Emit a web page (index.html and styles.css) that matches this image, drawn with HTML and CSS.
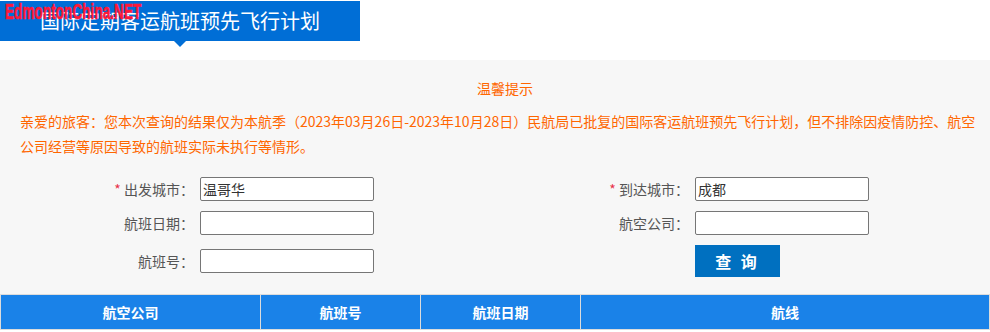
FILE: index.html
```
<!DOCTYPE html>
<html lang="zh-CN">
<head>
    <meta charset="UTF-8">
    <title>国际定期客运航班预先飞行计划</title>
    <link rel="stylesheet" href="styles.css">
</head>
<body>
    <div class="watermark">EdmontonChina.NET</div>
    <div class="tab">国际定期客运航班预先飞行计划</div>

    <div class="panel">
        <div class="tips-title">温馨提示</div>
        <p class="tips">亲爱的旅客：您本次查询的结果仅为本航季（2023年03月26日-2023年10月28日）民航局已批复的国际客运航班预先飞行计划，但不排除因疫情防控、航空公司经营等原因导致的航班实际未执行等情形。</p>

        <div class="form">
            <div class="field">
                <label><span class="req">*</span> 出发城市：</label>
                <input type="text" value="温哥华">
            </div>
            <div class="field">
                <label><span class="req">*</span> 到达城市：</label>
                <input type="text" value="成都">
            </div>
            <div class="field">
                <label>航班日期：</label>
                <input type="text">
            </div>
            <div class="field">
                <label>航空公司：</label>
                <input type="text">
            </div>
            <div class="field tall">
                <label>航班号：</label>
                <input type="text">
            </div>
            <div class="field tall">
                <label></label>
                <button>查 询</button>
            </div>
        </div>

        <table class="result">
            <thead>
                <tr>
                    <th class="c1">航空公司</th>
                    <th class="c2">航班号</th>
                    <th class="c3">航班日期</th>
                    <th>航线</th>
                </tr>
            </thead>
        </table>
    </div>
</body>
</html>
```

FILE: styles.css
```
body {
    margin: 0;
    font-family: "Noto Sans CJK SC", "Liberation Sans", sans-serif;
    font-size: 14px;
    background: #fff;
}
.watermark {
    position: absolute;
    left: 5px;
    top: -1px;
    font-family: "Liberation Sans", "DejaVu Sans", sans-serif;
    font-weight: bold;
    font-size: 22px;
    color: #ff1838;
    -webkit-text-stroke: 0.6px #ff1838;
    transform: scaleX(0.62);
    transform-origin: left top;
    z-index: 2;
}
.tab {
    position: relative;
    width: 360px;
    height: 40px;
    line-height: 40px;
    margin-top: 1px;
    background: #006ed6;
    color: #fff;
    font-size: 20px;
    text-align: center;
}
.tab::after {
    content: "";
    position: absolute;
    left: 174px;
    bottom: -6px;
    border-left: 6px solid transparent;
    border-right: 6px solid transparent;
    border-top: 6px solid #006ed6;
}
.panel {
    margin-top: 19px;
    background: #f7f7f7;
    padding-top: 18px;
}
.tips-title {
    text-align: center;
    color: #ff6600;
    line-height: 20px;
    padding-left: 20px;
}
.tips {
    margin: 11px 0 0;
    padding: 0 14px 0 20px;
    color: #ff6600;
    line-height: 25px;
}
.form {
    display: grid;
    grid-template-columns: 495px 495px;
    row-gap: 10px;
    margin-top: 18px;
}
.field {
    display: flex;
    align-items: center;
    height: 24px;
}
.field.tall {
    height: 32px;
}
.field label {
    width: 194px;
    margin-right: 6px;
    text-align: right;
    color: #555;
}
.req {
    color: #e8314a;
}
.field input {
    width: 174px;
    height: 24px;
    box-sizing: border-box;
    border: 1px solid #767676;
    border-radius: 2px;
    background: #fff;
    padding: 0 2px;
    font-family: inherit;
    font-size: 14px;
    color: #333;
}
button {
    width: 85px;
    height: 32px;
    border: none;
    background: #0070c0;
    color: #fff;
    font-family: inherit;
    font-size: 16px;
    font-weight: bold;
    letter-spacing: 3px;
    padding-left: 6px;
    cursor: pointer;
}
.result {
    width: 990px;
    margin-top: 17px;
    border-collapse: collapse;
    table-layout: fixed;
}
.result th {
    height: 34px;
    padding: 0;
    background: #1a82e8;
    color: #fff;
    font-weight: bold;
    border: 1px solid #dcdcdc;
}
.c1 {
    width: 259px;
}
.c2,
.c3 {
    width: 159px;
}
```
